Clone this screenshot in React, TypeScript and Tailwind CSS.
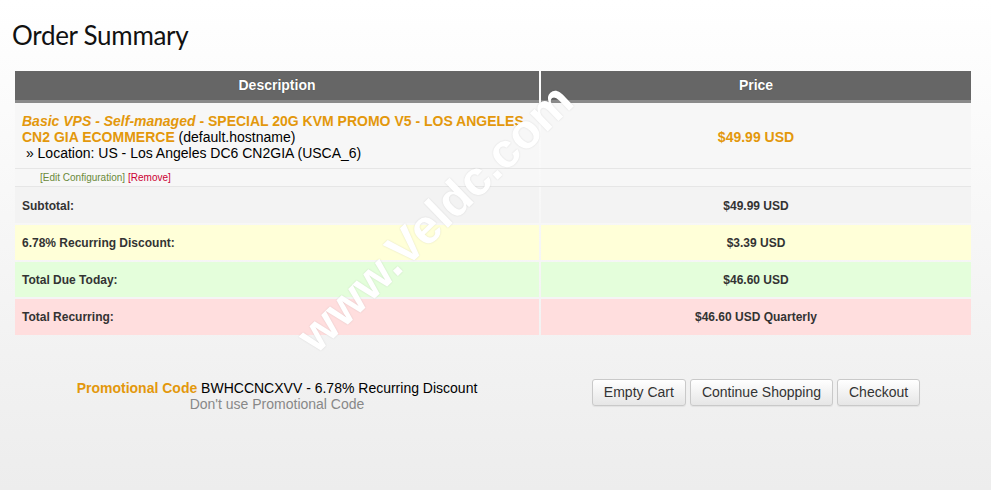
import React from 'react';

const orange = 'text-[#e3980c]';

export default function App() {
    return (
        <div className="relative min-h-[490px] w-full overflow-hidden bg-gradient-to-b from-white to-[#ededed] font-['Liberation_Sans',Arial,sans-serif] text-[#333]">
            {/* --- TITLE --- */}
            <h1 className="pl-[12px] pt-[17px] h-[71px] font-['Lato',sans-serif] text-[26px] tracking-[-0.3px] leading-[36px] text-[#111]">
                Order Summary
            </h1>

            {/* --- CART TABLE --- */}
            <div className="mx-[15px] w-[956px] flex flex-col">
                {/* header */}
                <div className="grid grid-cols-[524px_430px] gap-x-[2px]">
                    <div className="h-[32px] bg-[#666] border-b-[3px] border-[#8a8a8a] flex items-center justify-center text-white text-[14px] font-bold [text-shadow:0_0_1px_rgba(0,0,0,0.4)]">
                        Description
                    </div>
                    <div className="h-[32px] bg-[#666] border-b-[3px] border-[#8a8a8a] flex items-center justify-center text-white text-[14px] font-bold [text-shadow:0_0_1px_rgba(0,0,0,0.4)]">
                        Price
                    </div>
                </div>

                {/* product */}
                <div className="grid grid-cols-[524px_430px] gap-x-[2px] border-b border-[#e6e6e6]">
                    <div className="h-[65px] bg-[#f7f7f7] px-[7px] pt-[10px] text-[14px] leading-[16px] text-black">
                        <span className={`${orange} font-bold`}>
                            <em>Basic VPS - Self-managed</em> - SPECIAL 20G KVM PROMO V5 - LOS ANGELES
                            <br />
                            CN2 GIA ECOMMERCE
                        </span>{' '}
                        (default.hostname)
                        <br />
                        &nbsp;» Location: US - Los Angeles DC6 CN2GIA (USCA_6)
                    </div>
                    <div className={`h-[65px] bg-[#f7f7f7] pt-[4px] flex items-center justify-center text-[14px] font-bold ${orange}`}>
                        $49.99 USD
                    </div>
                </div>
                <div className="grid grid-cols-[524px_430px] gap-x-[2px] border-b border-[#e6e6e6]">
                    <div className="h-[17px] bg-[#f7f7f7] pl-[25px] flex items-center text-[10px]">
                        <span className="text-[#6b8a3a]">[Edit Configuration]</span>
                        <span className="ml-[3px] text-[#cc0033]">[Remove]</span>
                    </div>
                    <div className="h-[17px] bg-[#f7f7f7]" />
                </div>

                {/* totals */}
                <div className="flex flex-col gap-[2px] text-[12px] font-bold text-[#333]">
                    <div className="grid grid-cols-[524px_430px] gap-x-[2px]">
                        <div className="h-[36px] bg-[#f3f3f3] px-[7px] pt-[2px] flex items-center">Subtotal:</div>
                        <div className="h-[36px] bg-[#f3f3f3] pt-[2px] flex items-center justify-center">$49.99 USD</div>
                    </div>
                    <div className="grid grid-cols-[524px_430px] gap-x-[2px]">
                        <div className="h-[35px] bg-[#ffffd8] px-[7px] flex items-center">6.78% Recurring Discount:</div>
                        <div className="h-[35px] bg-[#ffffd8] flex items-center justify-center">$3.39 USD</div>
                    </div>
                    <div className="grid grid-cols-[524px_430px] gap-x-[2px]">
                        <div className="h-[35px] bg-[#e4fedb] px-[7px] flex items-center">Total Due Today:</div>
                        <div className="h-[35px] bg-[#e4fedb] flex items-center justify-center">$46.60 USD</div>
                    </div>
                    <div className="grid grid-cols-[524px_430px] gap-x-[2px]">
                        <div className="h-[36px] bg-[#ffdede] px-[7px] flex items-center">Total Recurring:</div>
                        <div className="h-[36px] bg-[#ffdede] flex items-center justify-center">$46.60 USD Quarterly</div>
                    </div>
                </div>

                {/* promo + actions */}
                <div className="mt-[45px] grid grid-cols-[524px_430px] gap-x-[2px]">
                    <div className="flex flex-col items-center text-[14px] leading-[16px]">
                        <div className="text-black">
                            <span className={`${orange} font-bold`}>Promotional Code</span> BWHCCNCXVV - 6.78% Recurring Discount
                        </div>
                        <div className="text-[#888]">Don't use Promotional Code</div>
                    </div>
                    <div className="flex justify-center gap-[4px] -mt-[1px]">
                        {['Empty Cart', 'Continue Shopping', 'Checkout'].map((label) => (
                            <button
                                key={label}
                                className="h-[27px] px-[11px] rounded-[3px] border border-[#c9c9c9] bg-gradient-to-b from-white to-[#e6e6e6] text-[14px] text-[#333] shadow-[0_1px_1px_rgba(0,0,0,0.06)]"
                            >
                                {label}
                            </button>
                        ))}
                    </div>
                </div>
            </div>

            {/* --- WATERMARK --- */}
            <div className="pointer-events-none absolute left-[435px] top-[218px] -translate-x-1/2 -translate-y-1/2 -rotate-[44deg] whitespace-nowrap font-['Liberation_Sans',Arial,sans-serif] text-[48px] font-bold text-white [text-shadow:0_0_2px_rgba(0,0,0,0.12)]">
                www.Veldc.com
            </div>
        </div>
    );
}
